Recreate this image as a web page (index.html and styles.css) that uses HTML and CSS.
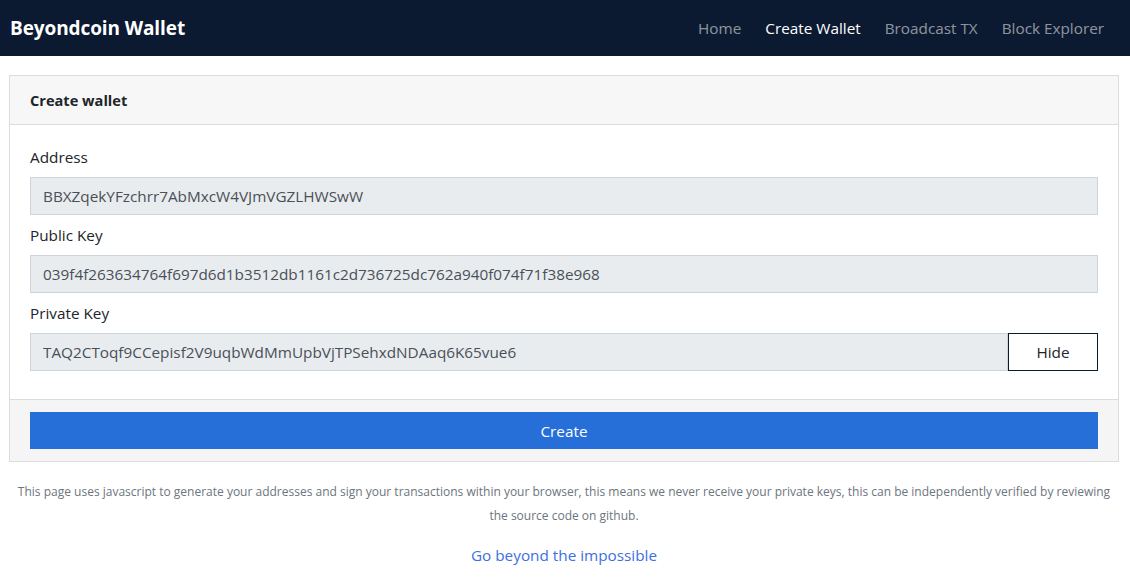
FILE: index.html
```
<!DOCTYPE html>
<html lang="en">
  <head>
    <meta charset="UTF-8" />
    <meta name="viewport" content="width=device-width, initial-scale=1.0" />
    <title>Beyondcoin Wallet</title>
    <link rel="stylesheet" href="styles.css">
  </head>
  <body>
    <nav class="navbar">
      <a class="brand" href="#">Beyondcoin Wallet</a>
      <ul class="nav-links">
        <li><a href="#">Home</a></li>
        <li><a class="active" href="#">Create Wallet</a></li>
        <li><a href="#">Broadcast TX</a></li>
        <li><a href="#">Block Explorer</a></li>
      </ul>
    </nav>

    <div class="container">
      <div class="card">
        <div class="card-header">Create wallet</div>
        <div class="card-body">
          <div class="form-group">
            <label>Address</label>
            <input class="form-control" type="text" value="BBXZqekYFzchrr7AbMxcW4VJmVGZLHWSwW" readonly>
          </div>
          <div class="form-group">
            <label>Public Key</label>
            <input class="form-control" type="text" value="039f4f263634764f697d6d1b3512db1161c2d736725dc762a940f074f71f38e968" readonly>
          </div>
          <div class="form-group">
            <label>Private Key</label>
            <div class="input-group">
              <input class="form-control" type="text" value="TAQ2CToqf9CCepisf2V9uqbWdMmUpbVjTPSehxdNDAaq6K65vue6" readonly>
              <button class="btn-outline">Hide</button>
            </div>
          </div>
        </div>
        <div class="card-footer">
          <button class="btn-primary">Create</button>
        </div>
      </div>

      <p class="note">This page uses javascript to generate your addresses and sign your transactions within your browser, this means we never receive your private keys, this can be independently verified by reviewing the source code on github.</p>
      <p class="tagline"><a href="#">Go beyond the impossible</a></p>
    </div>
  </body>
</html>
```

FILE: styles.css
```
body {
  font-family: "Open Sans", "Noto Sans", sans-serif;
  font-size: 15.3px;
  margin: 0;
  padding: 0;
  color: #212529;
  background-color: white;
}

a {
  text-decoration: none;
}

.navbar {
  display: flex;
  justify-content: space-between;
  align-items: center;
  height: 56px;
  padding: 0 14px 0 10px;
  background-color: #0c1a31;
}

.brand {
  color: white;
  font-size: 19px;
  font-weight: 700;
  letter-spacing: -0.1px;
}

.nav-links {
  display: flex;
  list-style: none;
  margin: 0;
  padding: 0;
}

.nav-links a {
  display: block;
  padding: 8px 12px;
  color: rgba(255, 255, 255, 0.55);
}

.nav-links a.active {
  color: white;
}

.container {
  padding: 19px 11px 0 9px;
}

.card {
  border: 1px solid #dcdcdc;
}

.card-header {
  padding: 14px 20px;
  font-size: 14.6px;
  font-weight: 700;
  line-height: 20px;
  background-color: #f7f7f7;
  border-bottom: 1px solid #dcdcdc;
}

.card-body {
  padding: 20px 20px 20px;
}

.form-group {
  margin-bottom: 8px;
}

.form-group label {
  display: block;
  line-height: 24px;
  margin-bottom: 8px;
}

.form-control {
  display: block;
  box-sizing: border-box;
  width: 100%;
  height: 38px;
  padding: 6px 12px;
  font-family: inherit;
  font-size: 15.3px;
  color: #495057;
  background-color: #e9ecef;
  border: 1px solid #ced4da;
  outline: none;
}

.input-group {
  display: flex;
}

.input-group .form-control {
  flex: 1;
}

.btn-outline {
  width: 90px;
  height: 38px;
  font-family: inherit;
  font-size: 15.3px;
  color: #212529;
  background-color: white;
  border: 1px solid #0c1a31;
}

.card-footer {
  padding: 12px 20px;
  background-color: #f5f5f5;
  border-top: 1px solid #dcdcdc;
}

.btn-primary {
  display: block;
  width: 100%;
  height: 37px;
  font-family: inherit;
  font-size: 15.3px;
  color: white;
  background-color: #266ed8;
  border: none;
}

.note {
  margin: 18px 0 0;
  text-align: center;
  font-size: 12px;
  line-height: 24px;
  color: #6c757d;
}

.tagline {
  margin: 17px 0 0;
  text-align: center;
}

.tagline a {
  color: #3d6fe0;
}
```
